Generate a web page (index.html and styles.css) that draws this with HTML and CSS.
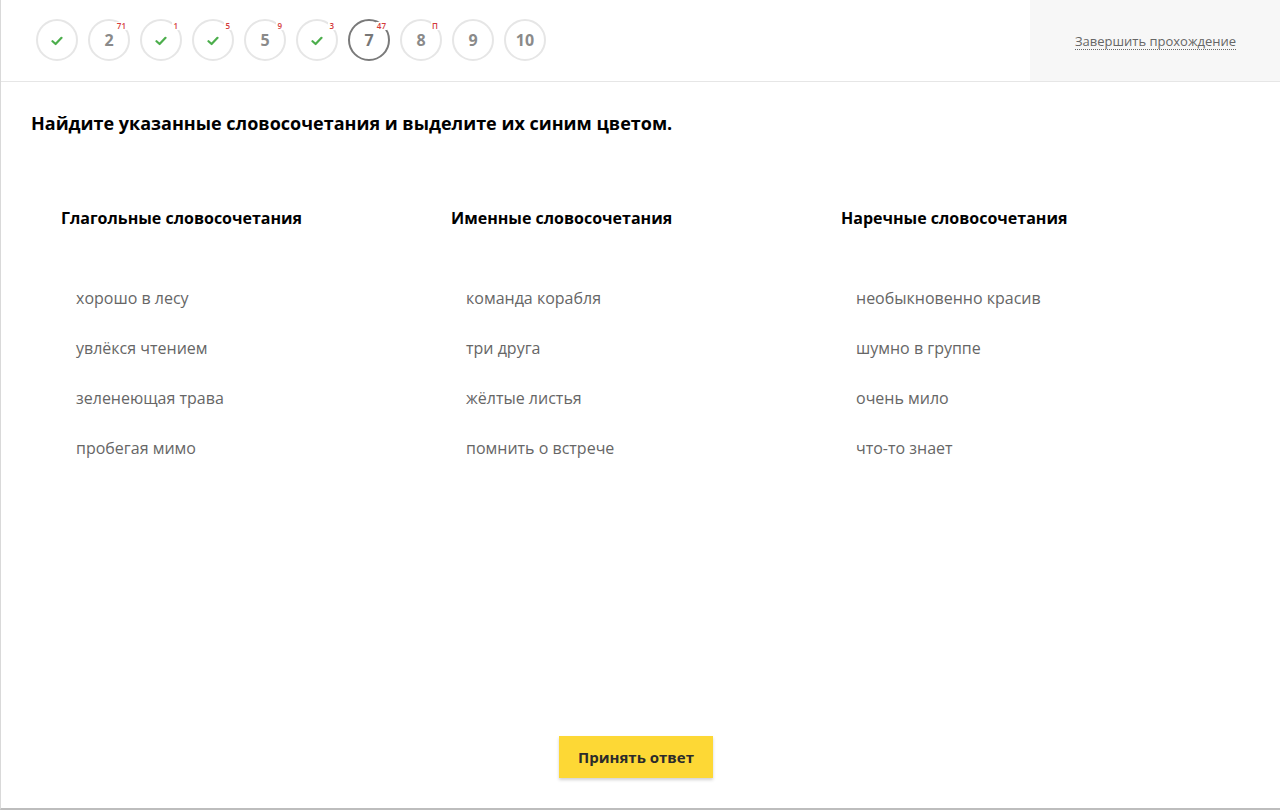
FILE: index.html
```html
<!DOCTYPE html>
<html lang="ru">
<head>
<meta charset="utf-8">
<title>Задание</title>
<link rel="stylesheet" href="styles.css">
</head>
<body>
<div class="frame">
  <header class="topbar">
    <nav class="steps">
      <div class="step done"><svg class="tick" viewBox="0 0 12 10"><path d="M1.5 5.2 L4.6 8 L10.5 1.8" /></svg></div>
      <div class="step"><span class="num">2</span><span class="badge">71</span></div>
      <div class="step done"><svg class="tick" viewBox="0 0 12 10"><path d="M1.5 5.2 L4.6 8 L10.5 1.8" /></svg><span class="badge">1</span></div>
      <div class="step done"><svg class="tick" viewBox="0 0 12 10"><path d="M1.5 5.2 L4.6 8 L10.5 1.8" /></svg><span class="badge">5</span></div>
      <div class="step"><span class="num">5</span><span class="badge">9</span></div>
      <div class="step done"><svg class="tick" viewBox="0 0 12 10"><path d="M1.5 5.2 L4.6 8 L10.5 1.8" /></svg><span class="badge">3</span></div>
      <div class="step active"><span class="num">7</span><span class="badge">47</span></div>
      <div class="step"><span class="num">8</span><span class="badge">П</span></div>
      <div class="step"><span class="num">9</span></div>
      <div class="step"><span class="num">10</span></div>
    </nav>
    <div class="finish"><a class="finish-link">Завершить прохождение</a></div>
  </header>
  <main class="task">
    <h1 class="question">Найдите указанные словосочетания и выделите их синим цветом.</h1>
    <div class="columns">
      <section class="col">
        <h2 class="col-title">Глагольные словосочетания</h2>
        <ul class="items">
          <li>хорошо в лесу</li>
          <li>увлёкся чтением</li>
          <li>зеленеющая трава</li>
          <li>пробегая мимо</li>
        </ul>
      </section>
      <section class="col">
        <h2 class="col-title">Именные словосочетания</h2>
        <ul class="items">
          <li>команда корабля</li>
          <li>три друга</li>
          <li>жёлтые листья</li>
          <li>помнить о встрече</li>
        </ul>
      </section>
      <section class="col">
        <h2 class="col-title">Наречные словосочетания</h2>
        <ul class="items">
          <li>необыкновенно красив</li>
          <li>шумно в группе</li>
          <li>очень мило</li>
          <li>что-то знает</li>
        </ul>
      </section>
    </div>
    <div class="actions">
      <button class="submit">Принять ответ</button>
    </div>
  </main>
</div>
</body>
</html>
```
FILE: styles.css
```css
* { box-sizing: border-box; }
html, body { margin: 0; padding: 0; }
body {
  font-family: "Open Sans", "Noto Sans", sans-serif;
  background: #fff;
  color: #000;
  width: 1280px;
  height: 810px;
  overflow: hidden;
}
.frame {
  height: 810px;
  border-left: 1px solid #d9d9d9;
  border-bottom: 2px solid #bdbdbd;
  display: flex;
  flex-direction: column;
}
.topbar {
  height: 82px;
  display: flex;
  border-bottom: 1px solid #e6e6e6;
  flex-shrink: 0;
}
.steps {
  flex: 1;
  display: flex;
  align-items: center;
  gap: 10px;
  padding-left: 35px;
  padding-bottom: 1px;
}
.step {
  position: relative;
  width: 42px;
  height: 42px;
  border: 2px solid #e6e6e6;
  border-radius: 50%;
  display: flex;
  align-items: center;
  justify-content: center;
}
.step.active { border-color: #7a7a7a; }
.num {
  font-size: 16px;
  font-weight: 700;
  color: #8a8a8a;
  line-height: 1;
}
.step.active .num { color: #777; }
.tick {
  width: 12px;
  height: 10px;
  margin-top: 1px;
}
.tick path {
  fill: none;
  stroke: #4cae4c;
  stroke-width: 2.2;
  stroke-linecap: round;
  stroke-linejoin: round;
}
.badge {
  position: absolute;
  top: 1px;
  right: 1px;
  font-size: 8px;
  line-height: 1;
  color: #d43a3a;
  font-weight: 600;
  background: #fff;
  padding: 0 1px;
}
.finish {
  width: 250px;
  background: #f7f7f7;
  display: flex;
  align-items: center;
  justify-content: flex-end;
  padding-right: 44px;
  padding-top: 2px;
}
.finish-link {
  font-size: 13px;
  color: #666;
  border-bottom: 1px dotted #666;
  line-height: 16px;
}
.task {
  flex: 1;
  display: flex;
  flex-direction: column;
  padding: 0 30px;
}
.question {
  margin: 28px 0 0;
  font-size: 18px;
  font-weight: 700;
  line-height: 26px;
  color: #000;
}
.columns {
  display: grid;
  grid-template-columns: 390px 390px 390px;
  padding-left: 30px;
  margin-top: 71px;
}
.col-title {
  margin: 0;
  font-size: 16px;
  font-weight: 700;
  line-height: 22px;
}
.items {
  list-style: none;
  margin: 58px 0 0;
  padding: 0 0 0 15px;
  display: flex;
  flex-direction: column;
  gap: 28px;
}
.items li {
  font-size: 16px;
  line-height: 22px;
  color: #666;
}
.actions {
  margin-top: auto;
  display: flex;
  justify-content: center;
  padding-bottom: 30px;
}
.submit {
  font-family: "Open Sans", "Noto Sans", sans-serif;
  background: #fdd835;
  border: none;
  width: 154px;
  height: 42px;
  font-size: 15px;
  font-weight: 700;
  color: #2b2b2b;
  box-shadow: 0 2px 3px rgba(0,0,0,0.18);
  margin-left: -9px;
}
```
